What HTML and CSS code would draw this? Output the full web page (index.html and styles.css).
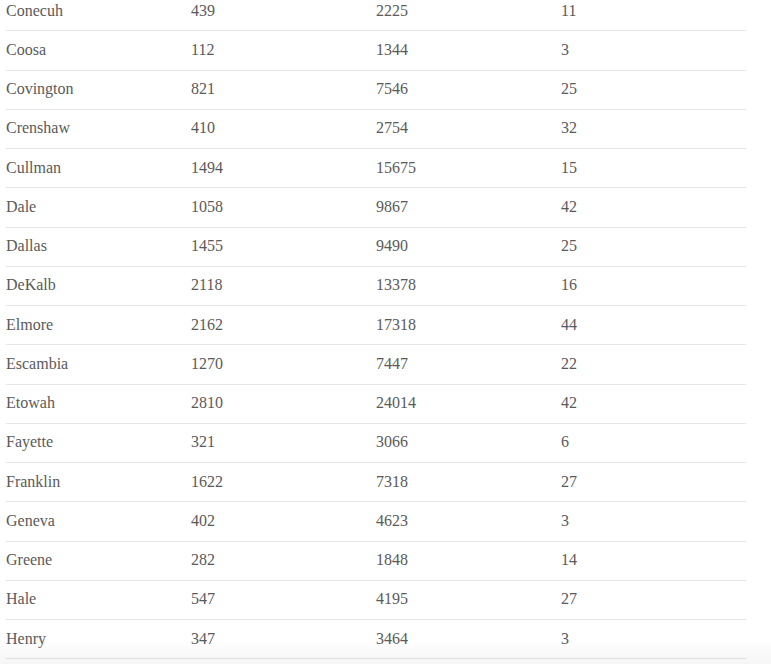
FILE: index.html
```html
<!DOCTYPE html>
<html lang="en">
<head>
<meta charset="utf-8">
<title>Counties</title>
<link rel="stylesheet" href="styles.css">
</head>
<body>
<div class="page">
  <table class="data">
    <colgroup><col class="c1"><col class="c2"><col class="c3"><col class="c4"></colgroup>
    <tbody>
      <tr><td>Conecuh</td><td>439</td><td>2225</td><td>11</td></tr>
      <tr><td>Coosa</td><td>112</td><td>1344</td><td>3</td></tr>
      <tr><td>Covington</td><td>821</td><td>7546</td><td>25</td></tr>
      <tr><td>Crenshaw</td><td>410</td><td>2754</td><td>32</td></tr>
      <tr><td>Cullman</td><td>1494</td><td>15675</td><td>15</td></tr>
      <tr><td>Dale</td><td>1058</td><td>9867</td><td>42</td></tr>
      <tr><td>Dallas</td><td>1455</td><td>9490</td><td>25</td></tr>
      <tr><td>DeKalb</td><td>2118</td><td>13378</td><td>16</td></tr>
      <tr><td>Elmore</td><td>2162</td><td>17318</td><td>44</td></tr>
      <tr><td>Escambia</td><td>1270</td><td>7447</td><td>22</td></tr>
      <tr><td>Etowah</td><td>2810</td><td>24014</td><td>42</td></tr>
      <tr><td>Fayette</td><td>321</td><td>3066</td><td>6</td></tr>
      <tr><td>Franklin</td><td>1622</td><td>7318</td><td>27</td></tr>
      <tr><td>Geneva</td><td>402</td><td>4623</td><td>3</td></tr>
      <tr><td>Greene</td><td>282</td><td>1848</td><td>14</td></tr>
      <tr><td>Hale</td><td>547</td><td>4195</td><td>27</td></tr>
      <tr><td>Henry</td><td>347</td><td>3464</td><td>3</td></tr>
    </tbody>
  </table>
</div>
<div class="bottom-fade"></div>
</body>
</html>
```
FILE: styles.css
```css
html, body {
  margin: 0;
  padding: 0;
  background: #ffffff;
  overflow: hidden;
}

.page {
  padding-left: 6px;
  margin-top: -8px;
}

.data {
  width: 740px;
  table-layout: fixed;
  border-collapse: separate;
  border-spacing: 0;
  font-family: "Liberation Serif", "DejaVu Serif", serif;
  font-size: 16px;
  color: #5a5a5a;
}

.data col {
  width: 25%;
}

.data td {
  padding: 7.5px 0 8.5px 0;
  line-height: 22.25px;
  border-bottom: 1px solid #e6e6e6;
  text-align: left;
  vertical-align: top;
  white-space: nowrap;
}

.bottom-fade {
  position: fixed;
  left: 0;
  right: 0;
  bottom: 0;
  height: 24px;
  background: linear-gradient(to bottom, rgba(0, 0, 0, 0) 0%, rgba(0, 0, 0, 0.025) 60%, rgba(0, 0, 0, 0.035) 100%);
  pointer-events: none;
}
```
